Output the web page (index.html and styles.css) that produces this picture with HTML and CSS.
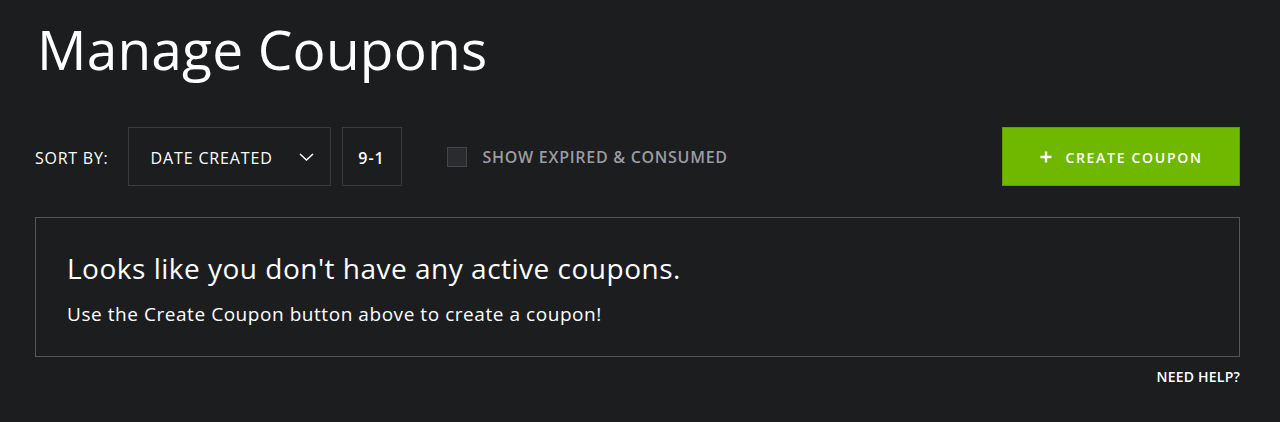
FILE: index.html
```html
<!DOCTYPE html>
<html lang="en">
<head>
    <meta charset="UTF-8">
    <meta name="viewport" content="width=device-width, initial-scale=1.0">
    <title>Manage Coupons</title>
    <link rel="stylesheet" href="styles.css">
</head>
<body>
    <div class="page">
        <h1 class="title">Manage Coupons</h1>

        <div class="toolbar">
            <div class="sort">
                <span class="sort-label">SORT BY:</span>
                <div class="select">
                    <span>DATE CREATED</span>
                    <svg class="chevron" width="15" height="8" viewBox="0 0 15 8">
                        <path d="M1 1 L7.5 7 L14 1" fill="none" stroke="#ffffff" stroke-width="1.5"/>
                    </svg>
                </div>
                <div class="order">9-1</div>
                <label class="expired">
                    <span class="checkbox"></span>
                    SHOW EXPIRED &amp; CONSUMED
                </label>
            </div>
            <button class="create-button">
                <svg class="plus" width="14" height="14" viewBox="0 0 14 14">
                    <path d="M7 1.5 V12.5 M1.5 7 H12.5" stroke="#ffffff" stroke-width="2.4"/>
                </svg>
                CREATE COUPON
            </button>
        </div>

        <div class="empty">
            <h2>Looks like you don't have any active coupons.</h2>
            <p>Use the Create Coupon button above to create a coupon!</p>
        </div>

        <div class="help">
            <a href="#">NEED HELP?</a>
        </div>
    </div>
</body>
</html>
```

FILE: styles.css
```css
body {
    font-family: "Open Sans", "Noto Sans", sans-serif;
    background-color: #1c1d1f;
    color: #ffffff;
    margin: 0;
    padding: 0;
}

.page {
    padding: 17px 40px 0 35px;
}

.title {
    font-size: 55px;
    font-weight: 400;
    letter-spacing: 0.2px;
    margin: 0 0 0 2px;
    line-height: 64px;
}

.toolbar {
    display: flex;
    justify-content: space-between;
    align-items: center;
    margin-top: 46px;
}

.sort {
    display: flex;
    align-items: center;
}

.sort-label {
    font-size: 16px;
    letter-spacing: 0.75px;
    margin-right: 19px;
    padding-top: 2px;
}

.select {
    display: flex;
    align-items: center;
    justify-content: space-between;
    width: 203px;
    height: 59px;
    box-sizing: border-box;
    padding: 2px 16px 0 22px;
    border: 1px solid #3a3b3e;
    font-size: 16px;
    letter-spacing: 0.85px;
}

.chevron {
    margin-bottom: 2px;
}

.order {
    display: flex;
    align-items: center;
    justify-content: center;
    width: 60px;
    height: 59px;
    box-sizing: border-box;
    padding-top: 2px;
    margin-left: 11px;
    border: 1px solid #3a3b3e;
    font-size: 16px;
    font-weight: 600;
    letter-spacing: 1px;
}

.expired {
    display: flex;
    align-items: center;
    margin-left: 45px;
    color: #9b9ca0;
    font-size: 16px;
    font-weight: 600;
    letter-spacing: 0.72px;
}

.checkbox {
    width: 20px;
    height: 20px;
    box-sizing: border-box;
    background-color: #2a2b2f;
    border: 1px solid #45464a;
    margin-right: 16px;
}

.create-button {
    display: flex;
    align-items: center;
    justify-content: center;
    width: 238px;
    height: 59px;
    padding: 2px 0 0;
    background-color: #70b800;
    border: 1px solid #5f9d00;
    color: #ffffff;
    font-family: inherit;
    font-size: 14px;
    font-weight: 600;
    letter-spacing: 1.7px;
    cursor: pointer;
}

.plus {
    margin: 0 12px 2px 0;
}

.empty {
    margin-top: 31px;
    border: 1px solid #55565a;
    padding: 33px 31px 29px;
}

.empty h2 {
    font-size: 28px;
    font-weight: 400;
    letter-spacing: 0.5px;
    margin: 0;
    line-height: 34px;
}

.empty p {
    font-size: 19px;
    letter-spacing: 0.55px;
    margin: 16px 0 0;
}

.help {
    text-align: right;
    margin-top: 10px;
    font-size: 14px;
}

.help a {
    color: #ffffff;
    text-decoration: none;
    font-weight: 600;
    letter-spacing: 0.2px;
}
```
